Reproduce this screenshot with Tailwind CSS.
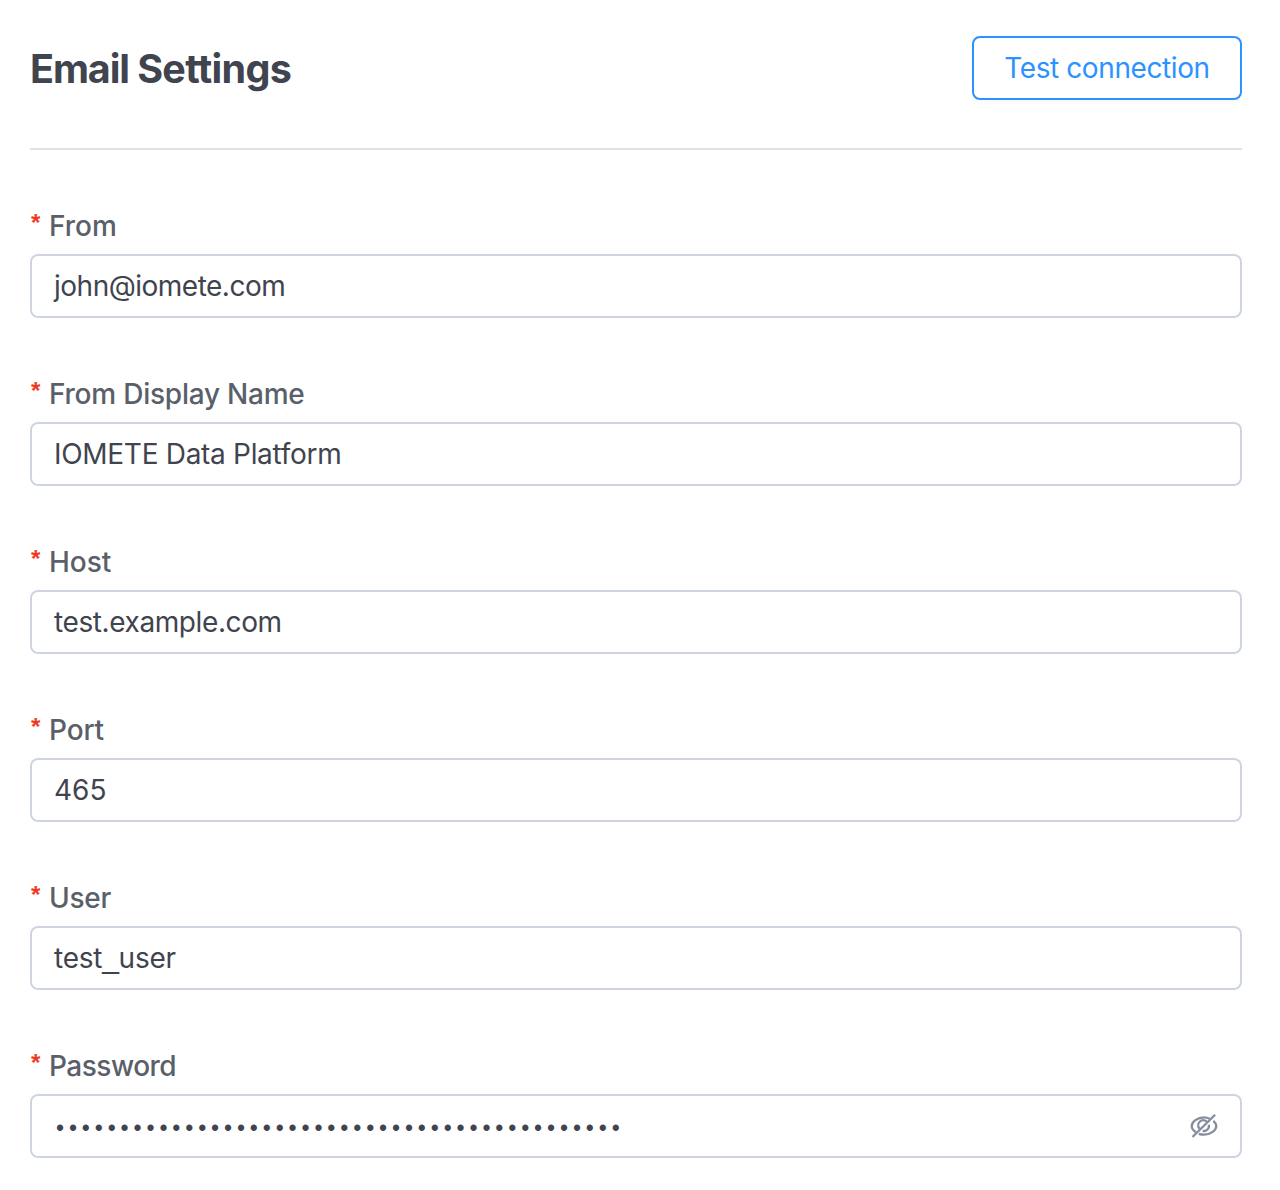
<!DOCTYPE html>
<html lang="en">
<head>
<meta charset="utf-8">
<title>Email Settings</title>
<script src="https://cdn.jsdelivr.net/npm/@tailwindcss/browser@4"></script>
</head>
<body class="bg-white font-['Inter',sans-serif] text-[#3f444e]">
<main class="w-[1280px] h-[1190px] overflow-hidden pl-[30px] pr-[38px] pt-9">
<header class="flex items-start justify-between h-[114px] border-b-2 border-[#dfe3e8]">
<h1 class="text-[39.5px] leading-[64px] font-[650] tracking-[-0.65px] pt-px"><span class="tracking-[-1.1px]">Email </span>Settings</h1>
<button type="button" class="w-[270px] h-16 rounded-lg border-2 border-[#2b93ff] text-[#2b93ff] text-[28px] tracking-[-0.4px] shadow-[0_4px_0_rgba(0,0,0,0.015)]">Test connection</button>
</header>
<form class="flex flex-col gap-12 pt-12">
<div>
<label class="flex h-14 items-center text-[28px] font-medium text-[#5a6069]"><span class="w-[19px] pl-px pb-1.5 font-['Liberation_Sans',sans-serif] font-bold text-[24px] leading-7 text-[#ee3a22]">*</span>From</label>
<div class="flex h-16 items-center rounded-lg border-2 border-[#ced4e0] px-[22px] text-[28px] tracking-[-0.5px]">john@iomete.com</div>
</div>
<div>
<label class="flex h-14 items-center text-[28px] font-medium text-[#5a6069] tracking-[-0.23px]"><span class="w-[19px] pl-px pb-1.5 font-['Liberation_Sans',sans-serif] font-bold text-[24px] leading-7 text-[#ee3a22]">*</span>From Display Name</label>
<div class="flex h-16 items-center rounded-lg border-2 border-[#ced4e0] px-[22px] text-[28px] tracking-[-0.3px]">IOMETE Data Platform</div>
</div>
<div>
<label class="flex h-14 items-center text-[28px] font-medium text-[#5a6069]"><span class="w-[19px] pl-px pb-1.5 font-['Liberation_Sans',sans-serif] font-bold text-[24px] leading-7 text-[#ee3a22]">*</span>Host</label>
<div class="flex h-16 items-center rounded-lg border-2 border-[#ced4e0] px-[22px] text-[28px] tracking-[-0.4px]">test.example.com</div>
</div>
<div>
<label class="flex h-14 items-center text-[28px] font-medium text-[#5a6069] tracking-[-0.15px]"><span class="w-[19px] pl-px pb-1.5 font-['Liberation_Sans',sans-serif] font-bold text-[24px] leading-7 text-[#ee3a22]">*</span>Port</label>
<div class="flex h-16 items-center rounded-lg border-2 border-[#ced4e0] px-[22px] text-[28px]">465</div>
</div>
<div>
<label class="flex h-14 items-center text-[28px] font-medium text-[#5a6069] tracking-[-0.25px]"><span class="w-[19px] pl-px pb-1.5 font-['Liberation_Sans',sans-serif] font-bold text-[24px] leading-7 text-[#ee3a22]">*</span>User</label>
<div class="flex h-16 items-center rounded-lg border-2 border-[#ced4e0] px-[22px] text-[28px] tracking-[-0.25px]"><span>test<span class="font-['Liberation_Sans',sans-serif] text-[30px] leading-none">_</span>user</span></div>
</div>
<div>
<label class="flex h-14 items-center text-[28px] font-medium text-[#5a6069] tracking-[-0.5px]"><span class="w-[19px] pl-px pb-1.5 font-['Liberation_Sans',sans-serif] font-bold text-[24px] leading-7 text-[#ee3a22]">*</span>Password</label>
<div class="flex h-16 items-center justify-between rounded-lg border-2 border-[#ced4e0] px-[22px]">
<span class="font-['Liberation_Sans',sans-serif] pl-0.5 pt-1 text-[23px] tracking-[4.87px]">••••••••••••••••••••••••••••••••••••••••••••</span>
<svg class="size-7" viewBox="0 0 28 28" fill="none" stroke="#858d9d" stroke-width="2.3">
<path d="M19.8 6.8C18.2 6 16.2 5.4 14 5.4C7.4 5.4 1.7 9.8 1.7 14C1.7 16.3 3.3 18.5 5.9 20.2M23.3 8.8C25.2 10.4 26.3 12.2 26.3 14C26.3 18.2 20.6 22.7 14 22.7C12.2 22.7 10.4 22.4 8.8 21.8"/>
<path d="M16.8 9.7A5 5 0 0 0 9.7 16.8M18.8 12.7A5 5 0 0 1 12.7 18.8"/>
<path d="M25.1 2.7L2.5 25"/>
</svg>
</div>
</div>
</form>
</main>
</body>
</html>
